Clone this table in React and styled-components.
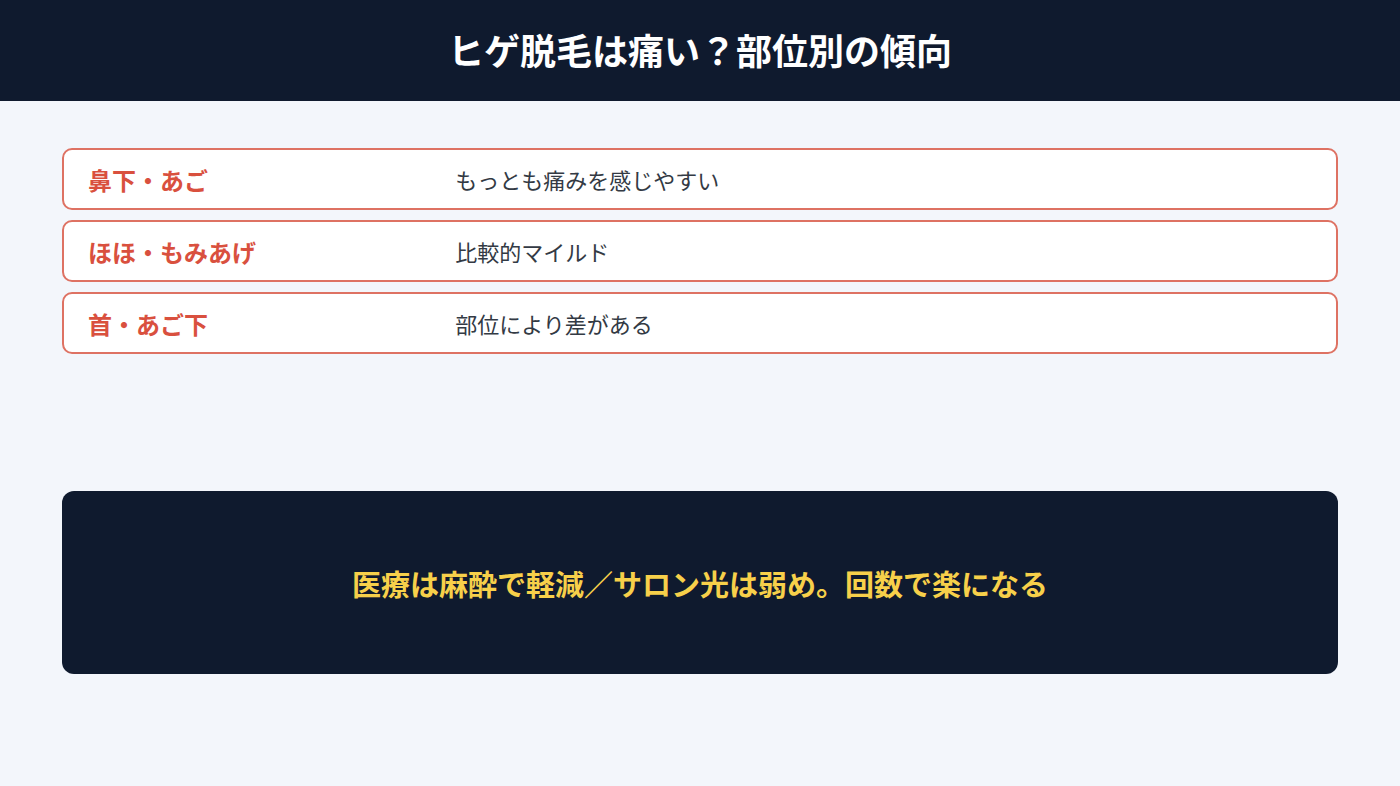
import styled, { createGlobalStyle } from "styled-components";

const GlobalStyle = createGlobalStyle`
  html, body {
    margin: 0;
    padding: 0;
    background: #f3f6fb;
    font-family: "Noto Sans CJK JP", "Noto Sans", sans-serif;
  }
`;

const rows = [
  { label: "鼻下・あご", value: "もっとも痛みを感じやすい" },
  { label: "ほほ・もみあげ", value: "比較的マイルド" },
  { label: "首・あご下", value: "部位により差がある" },
];

export default function App() {
  return (
    <Page>
      <GlobalStyle />
      <Header>
        <Title>ヒゲ脱毛は痛い？部位別の傾向</Title>
      </Header>
      <Main>
        <List>
          {rows.map((r) => (
            <Row key={r.label}>
              <Label>{r.label}</Label>
              <Value>{r.value}</Value>
            </Row>
          ))}
        </List>
        <Summary>
          <SummaryText>医療は麻酔で軽減／サロン光は弱め。回数で楽になる</SummaryText>
        </Summary>
      </Main>
    </Page>
  );
}

const Page = styled.div`
  width: 1400px;
  height: 786px;
  background: #f3f6fb;
  display: flex;
  flex-direction: column;
`;

const Header = styled.header`
  height: 101px;
  padding-bottom: 3px;
  background: #0f1a2e;
  display: flex;
  align-items: center;
  justify-content: center;
  box-sizing: border-box;
`;

const Title = styled.h1`
  margin: 0;
  color: #ffffff;
  font-size: 36px;
  font-weight: 700;
`;

const Main = styled.main`
  padding: 47px 62px 0;
  display: flex;
  flex-direction: column;
`;

const List = styled.div`
  display: flex;
  flex-direction: column;
  gap: 10px;
`;

const Row = styled.div`
  height: 62px;
  box-sizing: border-box;
  background: #ffffff;
  border: 2px solid #de7263;
  border-radius: 10px;
  display: grid;
  grid-template-columns: 30% 70%;
  align-items: center;
  padding: 0 24px;
`;

const Label = styled.div`
  color: #d9503e;
  font-size: 24px;
  font-weight: 700;
`;

const Value = styled.div`
  color: #333a44;
  font-size: 22px;
  font-weight: 400;
`;

const Summary = styled.div`
  margin-top: 137px;
  height: 183px;
  background: #0f1a2e;
  border-radius: 12px;
  display: flex;
  align-items: center;
  justify-content: center;
`;

const SummaryText = styled.p`
  margin: 0;
  color: #f7d04a;
  font-size: 29px;
  font-weight: 700;
`;
